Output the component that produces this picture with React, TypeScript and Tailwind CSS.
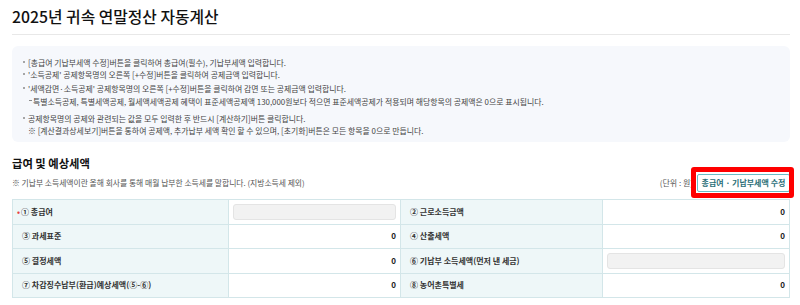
import React from "react";

const Dot = () => (
  <span className="mt-[4px] mr-[3px] inline-block h-[2px] w-[2px] shrink-0 rounded-full bg-[#8a8a8a]" />
);

type Cell =
  | { kind: "label"; text: string; req?: boolean }
  | { kind: "value"; text: string }
  | { kind: "input" };

const rows: Cell[][] = [
  [
    { kind: "label", text: "① 총급여", req: true },
    { kind: "input" },
    { kind: "label", text: "② 근로소득금액" },
    { kind: "value", text: "0" },
  ],
  [
    { kind: "label", text: "③ 과세표준" },
    { kind: "value", text: "0" },
    { kind: "label", text: "④ 산출세액" },
    { kind: "value", text: "0" },
  ],
  [
    { kind: "label", text: "⑤ 결정세액" },
    { kind: "value", text: "0" },
    { kind: "label", text: "⑥ 기납부 소득세액(먼저 낸 세금)" },
    { kind: "input" },
  ],
  [
    { kind: "label", text: "⑦ 차감징수납부(환급)예상세액(⑤-⑥)" },
    { kind: "value", text: "0" },
    { kind: "label", text: "⑧ 농어촌특별세" },
    { kind: "value", text: "0" },
  ],
];

function TableCell({ c }: { c: Cell }) {
  if (c.kind === "label") {
    return (
      <div className="flex h-[24.5px] items-center border-r border-b border-[#d3e6e9] bg-[#eef7f8] pl-[9px] text-[8px] font-bold text-[#333]">
        {c.req && <span className="mr-[1px] -ml-[5px] text-[8px] leading-none text-[#e8413f]">•</span>}
        <span>{c.text}</span>
      </div>
    );
  }
  if (c.kind === "input") {
    return (
      <div className="h-[24.5px] border-r border-b border-[#d3e6e9] bg-white px-[4px] py-[3.5px]">
        <div className="h-full w-full rounded-[3px] border border-[#e4e4e4] bg-[#f2f2f2]" />
      </div>
    );
  }
  return (
    <div className="flex h-[24.5px] items-center justify-end border-r border-b border-[#d3e6e9] bg-white pr-[4px] text-[8px] font-bold text-[#222]">
      {c.text}
    </div>
  );
}

export default function App() {
  return (
    <div className="h-[305px] w-[800px] overflow-hidden bg-white pl-[12px] pr-[10px] font-['Noto_Sans_CJK_KR','Noto_Sans',sans-serif] text-[#333]">
      <div className="border-b border-[#e8e8e8] pt-[8px] pb-[8px]">
        <h1 className="h-[18px] text-[15.8px] leading-[18px] font-medium text-[#111]">
          2025년 귀속 연말정산 자동계산
        </h1>
      </div>

      <div className="mt-[11px] h-[96px] rounded-[6px] bg-[#f6f8fc] pt-[11px] pl-[11px] text-[7.9px] leading-[12px] text-[#444]">
        <div className="flex">
          <Dot />
          <span>[총급여 기납부세액 수정]버튼을 클릭하여 총급여(필수), 기납부세액 입력합니다.</span>
        </div>
        <div className="flex">
          <Dot />
          <span>'소득공제' 공제항목명의 오른쪽 [+수정]버튼을 클릭하여 공제금액 입력합니다.</span>
        </div>
        <div className="mt-[2.3px] flex">
          <Dot />
          <span>'세액감면·소득공제' 공제항목명의 오른쪽 [+수정]버튼을 클릭하여 감면 또는 공제금액 입력합니다.</span>
        </div>
        <div className="mt-[0.7px] flex pl-[6px]">
          <span className="mt-[4px] mr-[1px] inline-block h-[1px] w-[3px] shrink-0 bg-[#8a8a8a]" />
          <span>
            특별소득공제, 특별세액공제, 월세액세액공제 혜택이 표준세액공제액 130,000원보다 적으면 표준세액공제가 적용되며 해당항목의 공제액은 0으로 표시됩니다.
          </span>
        </div>
        <div className="mt-[4.7px] flex">
          <Dot />
          <span>공제항목명의 공제와 관련되는 값을 모두 입력한 후 반드시 [계산하기]버튼 클릭합니다.</span>
        </div>
        <div className="mt-[0.3px] flex pl-[5px]">
          <span>※ [계산결과상세보기]버튼을 통하여 공제액, 추가납부 세액 확인 할 수 있으며, [초기화]버튼은 모든 항목을 0으로 만듭니다.</span>
        </div>
      </div>

      <h2 className="mt-[14px] h-[14px] text-[11.3px] leading-[14px] font-bold text-[#111]">
        급여 및 예상세액
      </h2>

      <div className="mt-[4px] flex h-[18px] items-center justify-between">
        <span className="text-[7.8px] leading-[10px] text-[#555]">
          ※ 기납부 소득세액이란 올해 회사를 통해 매월 납부한 소득세를 말합니다. (지방소득세 제외)
        </span>
        <div className="flex items-center gap-[4px]">
          <span className="text-[8px] leading-[10px] text-[#555]">(단위 : 원)</span>
          <div className="relative">
            <button className="flex h-[18px] w-[93px] items-center justify-center rounded-[2px] border border-[#6cbcc4] bg-white text-[8px] leading-none font-semibold text-[#2b6f78]">
              총급여 · 기납부세액 수정
            </button>
            <div className="pointer-events-none absolute -top-[7px] -right-[4px] -bottom-[6px] -left-[6px] rounded-[3px] border-[5px] border-[#ff0000]" />
          </div>
        </div>
      </div>

      <div className="mt-[7px] grid w-[778px] grid-cols-[216px_172px_202px_187px] border-t border-l border-[#d3e6e9]">
        {rows.map((r, i) => r.map((c, j) => <TableCell key={`${i}-${j}`} c={c} />))}
      </div>
    </div>
  );
}
